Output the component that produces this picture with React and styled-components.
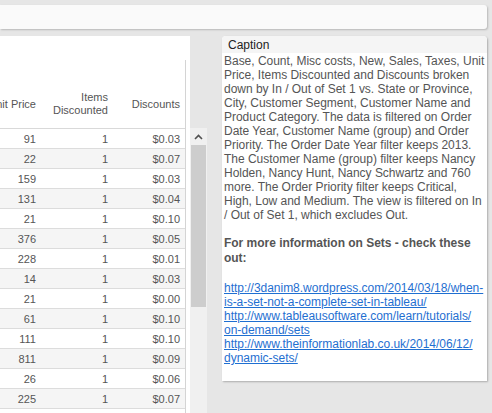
import React from "react";
import styled, { createGlobalStyle } from "styled-components";

const GlobalStyle = createGlobalStyle`
  html, body {
    margin: 0;
    padding: 0;
    background: #e6e6e6;
    font-family: "Liberation Sans", Arial, sans-serif;
  }
`;

const rows = [
  { price: 91, items: 1, discount: "$0.03" },
  { price: 22, items: 1, discount: "$0.07" },
  { price: 159, items: 1, discount: "$0.03" },
  { price: 131, items: 1, discount: "$0.04" },
  { price: 21, items: 1, discount: "$0.10" },
  { price: 376, items: 1, discount: "$0.05" },
  { price: 228, items: 1, discount: "$0.01" },
  { price: 14, items: 1, discount: "$0.03" },
  { price: 21, items: 1, discount: "$0.00" },
  { price: 61, items: 1, discount: "$0.10" },
  { price: 111, items: 1, discount: "$0.10" },
  { price: 811, items: 1, discount: "$0.09" },
  { price: 26, items: 1, discount: "$0.06" },
  { price: 225, items: 1, discount: "$0.07" },
];

const links = [
  "http://3danim8.wordpress.com/2014/03/18/when-is-a-set-not-a-complete-set-in-tableau/",
  "http://www.tableausoftware.com/learn/tutorials/on-demand/sets",
  "http://www.theinformationlab.co.uk/2014/06/12/dynamic-sets/",
];

// zero-width space after each slash so the urls wrap like the original caption
const breakable = (url) => url.replace(/\//g, "/\u200B");

const App = () => {
  return (
    <>
      <GlobalStyle />
      <Page>
        <TopBar />
        <Main>
          <Sheet>
            <Table>
              <HeaderRow>
                <Cell $w={41}>Unit Price</Cell>
                <Cell $w={72}>
                  Items
                  <br />
                  Discounted
                </Cell>
                <Cell $w={72}>Discounts</Cell>
              </HeaderRow>
              {rows.map((r, i) => (
                <Row key={i} $alt={i % 2 === 1}>
                  <Cell $w={41}>{r.price}</Cell>
                  <Cell $w={72}>{r.items}</Cell>
                  <Cell $w={72}>{r.discount}</Cell>
                </Row>
              ))}
              <Row />
            </Table>
          </Sheet>
          <Scrollbar>
            <ScrollButton>
              <svg width="9" height="6" viewBox="0 0 9 6">
                <path d="M1 5 L4.5 1.5 L8 5" fill="none" stroke="#505050" strokeWidth="1.6" />
              </svg>
            </ScrollButton>
            <Thumb />
          </Scrollbar>
          <CaptionPanel>
            <CaptionHeader>Caption</CaptionHeader>
            <CaptionBody>
              <p>
                Base, Count, Misc costs, New, Sales, Taxes, Unit Price, Items
                Discounted and Discounts broken down by In / Out of Set 1 vs.
                State or Province, City, Customer Segment, Customer Name and
                Product Category. The data is filtered on Order Date Year,
                Customer Name (group) and Order Priority. The Order Date Year
                filter keeps 2013. The Customer Name (group) filter keeps Nancy
                Holden, Nancy Hunt, Nancy Schwartz and 760 more. The Order
                Priority filter keeps Critical, High, Low and Medium. The view
                is filtered on In / Out of Set 1, which excludes Out.
              </p>
              <Strong>For more information on Sets - check these out:</Strong>
              <LinkList>
                {links.map((l) => (
                  <a key={l} href={l}>
                    {breakable(l)}
                  </a>
                ))}
              </LinkList>
            </CaptionBody>
          </CaptionPanel>
        </Main>
      </Page>
    </>
  );
};

const Page = styled.div`
  height: 413px;
  overflow: hidden;
  padding-top: 5px;
  box-sizing: border-box;
`;

const TopBar = styled.div`
  width: 487px;
  height: 24px;
  background: #fafafa;
  border-radius: 0 3px 3px 0;
  box-shadow: 1px 1px 2px rgba(0, 0, 0, 0.2);
`;

const Main = styled.div`
  display: flex;
  align-items: flex-start;
  margin-top: 7px;
`;

const Sheet = styled.div`
  width: 190px;
  height: 377px;
  background: #fff;
  overflow: hidden;
  padding-top: 24px;
  box-sizing: border-box;
`;

const Table = styled.div`
  width: 185px;
  border-right: 1px solid #d4d4d4;
  color: #555;
  font-size: 11px;
`;

const HeaderRow = styled.div`
  display: flex;
  height: 69px;
  padding-top: 20px;
  box-sizing: border-box;
  border-bottom: 1px solid #d9d9d9;
  line-height: 13px;
`;

const Row = styled.div`
  display: flex;
  height: 20px;
  box-sizing: border-box;
  border-bottom: 1px solid #dcdcdc;
  background: ${(p) => (p.$alt ? "#f5f5f5" : "#fff")};
`;

const Cell = styled.div`
  width: ${(p) => p.$w}px;
  flex: none;
  display: flex;
  align-items: center;
  justify-content: flex-end;
  text-align: right;
  padding-right: 5px;
  box-sizing: border-box;
  white-space: nowrap;
`;

const Scrollbar = styled.div`
  width: 17px;
  height: 285px;
  margin-top: 92px;
  background: #f0f0f0;
  display: flex;
  flex-direction: column;
`;

const ScrollButton = styled.div`
  height: 17px;
  display: flex;
  align-items: center;
  justify-content: center;
`;

const Thumb = styled.div`
  height: 162px;
  margin: 0 1px;
  background: #cdcdcd;
`;

const CaptionPanel = styled.div`
  width: 265px;
  height: 345px;
  margin-left: 15px;
  background: #fff;
  border-radius: 4px 4px 0 0;
  box-shadow: 1px 1px 2px rgba(0, 0, 0, 0.25);
`;

const CaptionHeader = styled.div`
  height: 17px;
  line-height: 18px;
  padding-left: 6px;
  font-size: 12px;
  color: #222;
  background: #f5f5f5;
  border-radius: 4px 4px 0 0;
`;

const CaptionBody = styled.div`
  padding: 1px 0 0 2px;
  font-size: 12px;
  line-height: 14px;
  letter-spacing: -0.02px;
  color: #555;

  p {
    margin: 0 0 14px;
  }
`;

const Strong = styled.div`
  font-weight: 700;
  font-size: 12px;
  line-height: 15px;
  margin-bottom: 15px;
  padding-right: 10px;
`;

const LinkList = styled.div`
  display: flex;
  flex-direction: column;

  a {
    color: #1f6fd1;
    text-decoration: underline;
  }
`;

export default App;
